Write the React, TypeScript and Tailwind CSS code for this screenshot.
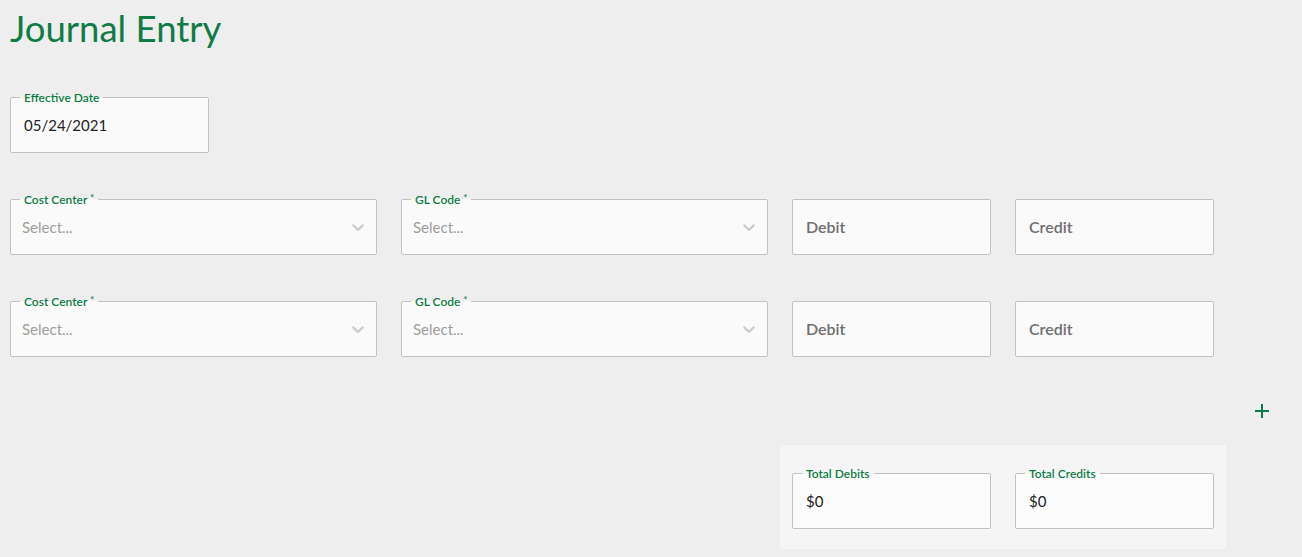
import React from "react";

const GREEN = "text-[#0f7b45]";

function ChevronDown() {
    return (
        <svg width="20" height="20" viewBox="0 0 20 20" className="fill-[#cccccc]">
            <path d="M4.516 7.548c0.436-0.446 1.043-0.481 1.576 0l3.908 3.747 3.908-3.747c0.533-0.481 1.141-0.446 1.574 0 0.436 0.445 0.408 1.197 0 1.615-0.406 0.418-4.695 4.502-4.695 4.502-0.217 0.223-0.502 0.335-0.787 0.335s-0.57-0.112-0.789-0.335c0 0-4.287-4.084-4.695-4.502s-0.436-1.17 0-1.615z" />
        </svg>
    );
}

function Label({ text, required, panel }: { text: string; required?: boolean; panel?: boolean }) {
    return (
        <span
            className={`absolute top-[-7px] left-[9px] px-[4px] text-[12px] leading-[13px] font-semibold whitespace-nowrap ${GREEN} ${
                panel
                    ? "bg-[linear-gradient(to_bottom,#f5f5f5_50%,#fbfbfb_50%)]"
                    : "bg-[linear-gradient(to_bottom,#eeeeee_50%,#fafafa_50%)]"
            }`}
        >
            {text}
            {required && <span className="ml-[3px] text-[9px] align-top leading-[9px]">*</span>}
        </span>
    );
}

function Box({
    width,
    label,
    required,
    panel,
    children,
}: {
    width: string;
    label?: string;
    required?: boolean;
    panel?: boolean;
    children: React.ReactNode;
}) {
    return (
        <div
            className={`relative ${width} h-[56px] shrink-0 border border-[#c2c2c2] rounded-[2px] ${
                panel ? "bg-[#fbfbfb]" : "bg-[#fafafa]"
            } flex items-center`}
        >
            {label && <Label text={label} required={required} panel={panel} />}
            {children}
        </div>
    );
}

function SelectBox({ label }: { label: string }) {
    return (
        <Box width="w-[367px]" label={label} required>
            <div className="flex flex-1 items-center justify-between pl-[11px] pr-[8px]">
                <span className="text-[15px] text-[#9e9e9e]">Select...</span>
                <ChevronDown />
            </div>
        </Box>
    );
}

function AmountBox({ placeholder }: { placeholder: string }) {
    return (
        <Box width="w-[199px]">
            <span className="pl-[13px] text-[16px] font-semibold text-[#6f6f6f]">{placeholder}</span>
        </Box>
    );
}

function EntryRow() {
    return (
        <div className="flex gap-[24px]">
            <SelectBox label="Cost Center" />
            <SelectBox label="GL Code" />
            <AmountBox placeholder="Debit" />
            <AmountBox placeholder="Credit" />
        </div>
    );
}

export default function App() {
    return (
        <div className="min-h-screen bg-[#eeeeee] font-[Lato,sans-serif] text-[#222222]">
            <div className="px-[10px] pt-[10px] pb-[8px]">
                {/* Header */}
                <h1 className={`text-[36.5px] leading-[36px] font-normal ${GREEN}`}>Journal Entry</h1>

                {/* Effective date */}
                <div className="mt-[51px]">
                    <Box width="w-[199px]" label="Effective Date">
                        <span className="pl-[13px] text-[15px]">05/24/2021</span>
                    </Box>
                </div>

                {/* Lines */}
                <div className="mt-[46px] flex flex-col gap-[46px]">
                    <EntryRow />
                    <EntryRow />
                </div>

                {/* Add line */}
                <div className="mt-[47px] ml-[1245px] h-[14px] w-[14px]">
                    <svg width="14" height="14" viewBox="0 0 14 14" className="fill-[#0d7a45]">
                        <rect x="0" y="6" width="14" height="2" />
                        <rect x="6" y="0" width="2" height="14" />
                    </svg>
                </div>

                {/* Totals */}
                <div className="mt-[27px] ml-[770px] w-[446px] bg-[#f5f5f5] pt-[28px] pb-[20px] px-[12px] flex gap-[24px]">
                    <Box width="w-[199px]" label="Total Debits" panel>
                        <span className="pl-[13px] text-[15px]">$0</span>
                    </Box>
                    <Box width="w-[199px]" label="Total Credits" panel>
                        <span className="pl-[13px] text-[15px]">$0</span>
                    </Box>
                </div>
            </div>
        </div>
    );
}
